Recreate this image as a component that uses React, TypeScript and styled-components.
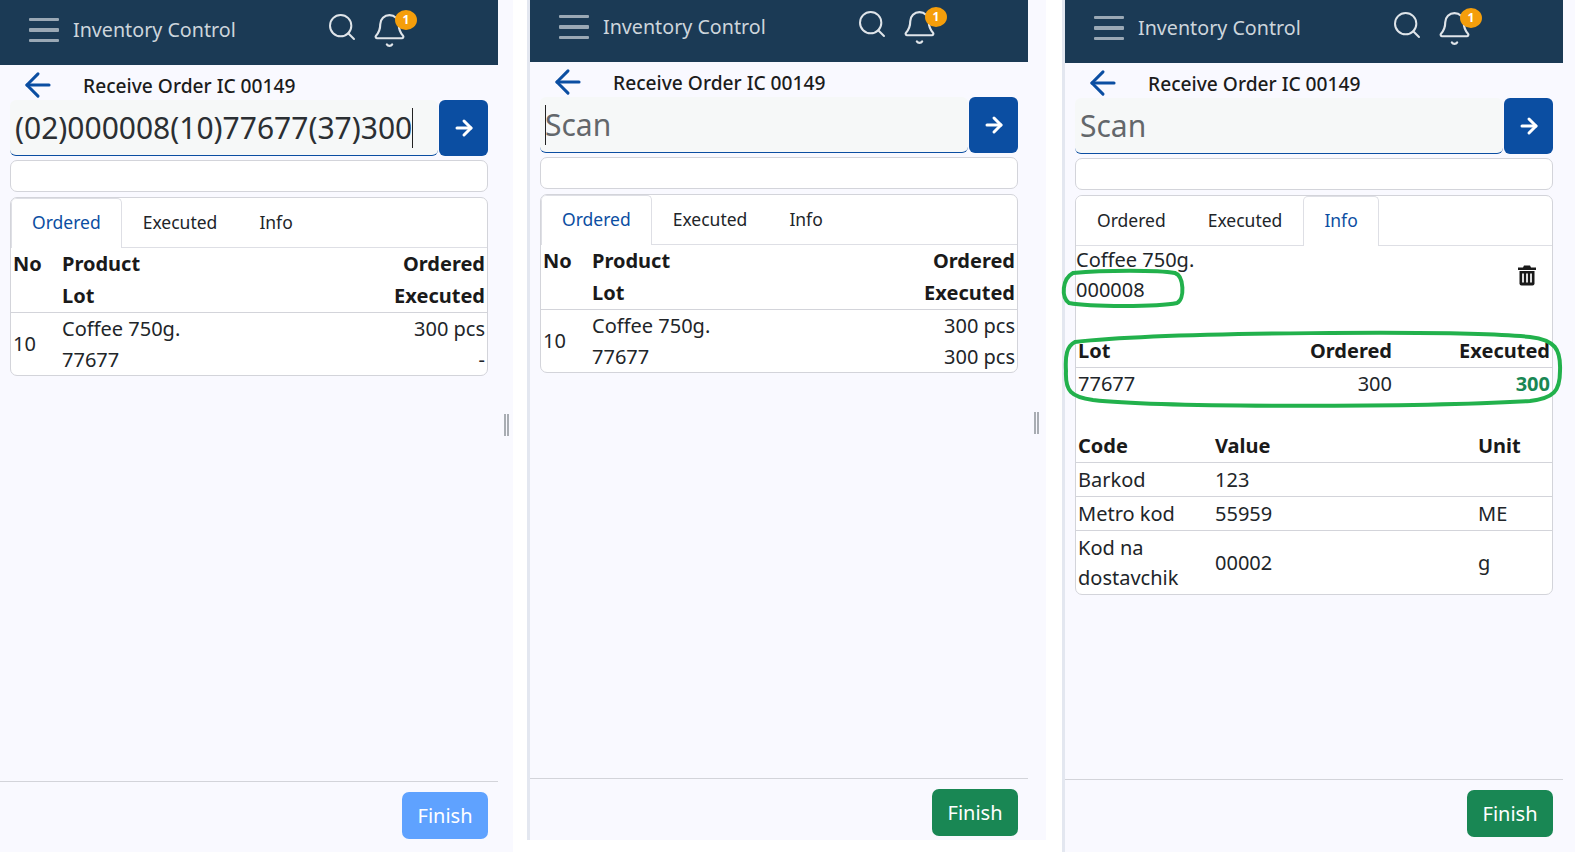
import React from "react";
import styled, { createGlobalStyle } from "styled-components";
import { ArrowLeft, ArrowRight, Bell, Search } from "lucide-react";

const GlobalStyle = createGlobalStyle`
	html, body {
		margin: 0;
		padding: 0;
		background: #ffffff;
		font-family: "Noto Sans", "Open Sans", sans-serif;
		color: #212529;
	}
`;

const Page = styled.div`
	display: flex;
	width: 1575px;
	height: 852px;
	overflow: hidden;
	background: #ffffff;
`;

const Panel = styled.div<{ $width: number; $height: number; $marginLeft: number; $edge?: boolean; $bottom: number; $gutter: number }>`
	position: relative;
	box-sizing: border-box;
	flex: none;
	width: ${p => p.$width}px;
	height: ${p => p.$height}px;
	margin-left: ${p => p.$marginLeft}px;
	padding-right: ${p => p.$gutter}px;
	padding-bottom: ${p => p.$bottom}px;
	background: #f9f9ff;
	border-left: ${p => (p.$edge ? "3px solid #e3e7f0" : "none")};
	display: flex;
	flex-direction: column;
`;

const Grip = styled.div<{ $right: number; $top: number }>`
	position: absolute;
	right: ${p => p.$right}px;
	top: ${p => p.$top}px;
	width: 1px;
	height: 22px;
	border-left: 2px solid #a9adb3;
	border-right: 2px solid #a9adb3;
`;

const TopBar = styled.header<{ $height: number }>`
	flex: none;
	box-sizing: border-box;
	height: ${p => p.$height}px;
	background: #1b3a55;
	display: flex;
	align-items: flex-end;
	padding: 0 0 10px 29px;
`;

const BarRow = styled.div`
	height: 50px;
	display: flex;
	align-items: center;
`;

const Burger = styled.div`
	width: 30px;
	display: flex;
	flex-direction: column;
	gap: 7px;
	margin-right: 14px;
	& > span {
		display: block;
		height: 3.5px;
		background: #9aa8b5;
		border-radius: 1px;
	}
`;

const AppName = styled.div`
	width: 253px;
	margin-bottom: 2px;
	font-size: 19.7px;
	color: #cdd5dc;
	white-space: nowrap;
`;

const IconSlot = styled.div<{ $width: number; $raise?: number }>`
	position: relative;
	width: ${p => p.$width}px;
	margin-bottom: ${p => p.$raise ?? 0}px;
	display: flex;
	color: #dfe4e9;
`;

const Badge = styled.span`
	position: absolute;
	left: 24px;
	top: -2px;
	width: 22px;
	height: 20px;
	border-radius: 50%;
	background: #f59e0b;
	color: #ffffff;
	font-size: 12px;
	font-weight: 700;
	line-height: 20px;
	text-align: center;
`;

const TitleRow = styled.div`
	flex: none;
	box-sizing: border-box;
	height: 35px;
	padding: 5px 0 0 19px;
	display: flex;
	align-items: center;
	font-size: 19.2px;
	font-weight: 500;
	color: #1c1c1c;
	& > svg {
		flex: none;
		color: #0b4ea2;
		margin-right: 26px;
	}
`;

const Content = styled.div`
	flex: 1;
	padding: 0 10px;
	display: flex;
	flex-direction: column;
`;

const ScanRow = styled.div`
	display: flex;
	height: 56px;
	gap: 1px;
`;

const ScanField = styled.div<{ $empty?: boolean }>`
	flex: 1;
	display: flex;
	align-items: center;
	padding: 0 5px;
	box-sizing: border-box;
	background: #f6f8f8;
	border-bottom: 1px solid #0b4ea2;
	border-radius: 6px;
	font-size: 30px;
	color: ${p => (p.$empty ? "#63676b" : "#2b2f33")};
	white-space: nowrap;
`;

const Caret = styled.span<{ $first?: boolean }>`
	display: inline-block;
	flex: none;
	width: 1px;
	height: 40px;
	margin-right: ${p => (p.$first ? "-1px" : "0")};
	background: #222222;
`;

const GoButton = styled.button`
	flex: none;
	width: 49px;
	border: none;
	border-radius: 6px;
	background: #0b4ea2;
	color: #ffffff;
	display: flex;
	align-items: center;
	justify-content: center;
	padding: 0;
`;

const MessageBox = styled.div`
	height: 30px;
	margin-top: 4px;
	background: #ffffff;
	border: 1px solid #d3d4da;
	border-radius: 7px;
`;

const Card = styled.div`
	margin-top: 5px;
	background: #ffffff;
	border: 1px solid #d3d4da;
	border-radius: 7px;
	overflow: hidden;
`;

const Tabs = styled.div`
	display: flex;
	height: 49px;
	border-bottom: 1px solid #dedfe5;
`;

const Tab = styled.div<{ $active?: boolean }>`
	display: flex;
	align-items: center;
	padding: 0 20px ${p => (p.$active ? "3px" : "2px")};
	font-size: 17.5px;
	margin-bottom: ${p => (p.$active ? "-1px" : "0")};
	color: ${p => (p.$active ? "#0b4ea2" : "#212529")};
	background: #ffffff;
	border-right: 1px solid ${p => (p.$active ? "#dedfe5" : "transparent")};
	border-left: 1px solid ${p => (p.$active ? "#dedfe5" : "transparent")};
	border-top: 1px solid ${p => (p.$active ? "#dedfe5" : "transparent")};
	border-radius: 5px 5px 0 0;
`;

const Grid = styled.table<{ $cellPad: number }>`
	width: 100%;
	border-collapse: collapse;
	font-size: 20px;
	& td {
		padding: ${p => p.$cellPad}px 2px;
	}
`;

const Th = styled.th<{ $right?: boolean; $width?: number }>`
	padding: 0 2px;
	line-height: 32px;
	font-weight: 700;
	text-align: ${p => (p.$right ? "right" : "left")};
	color: #1a1a1a;
	width: ${p => (p.$width ? `${p.$width}px` : "auto")};
`;

const Td = styled.td<{ $right?: boolean; $accent?: boolean }>`
	line-height: 30px;
	text-align: ${p => (p.$right ? "right" : "left")};
	color: ${p => (p.$accent ? "#198754" : "#212529")};
	font-weight: ${p => (p.$accent ? 700 : 400)};
`;

const HeadRow = styled.tr<{ $ruled?: boolean }>`
	border-bottom: ${p => (p.$ruled ? "1px solid #d3d4da" : "none")};
`;

const BodyRow = styled.tr<{ $last?: boolean }>`
	border-bottom: ${p => (p.$last ? "none" : "1px solid #d3d4da")};
`;

const ProductHead = styled.div`
	display: flex;
	justify-content: space-between;
	align-items: center;
	margin-top: -1px;
	font-size: 20px;
	line-height: 30px;
	color: #212529;
`;

const TrashButton = styled.div`
	display: flex;
	margin-right: 15px;
`;

const LotBlock = styled.div`
	margin-top: 30px;
`;

const CodeBlock = styled.div`
	margin-top: 31px;
`;

const Footer = styled.div`
	flex: none;
	height: 58px;
	box-sizing: border-box;
	border-top: 1px solid #d3d4da;
	padding: 10px 10px 0 0;
	display: flex;
	justify-content: flex-end;
`;

const FinishButton = styled.button<{ $disabled?: boolean }>`
	width: 86px;
	height: 47px;
	border: none;
	border-radius: 7px;
	background: ${p => (p.$disabled ? "#5fa2ff" : "#198754")};
	color: #ffffff;
	font-family: inherit;
	font-size: 20px;
	padding: 0;
`;

const Marks = styled.svg`
	position: absolute;
	left: 0;
	top: 0;
	width: 510px;
	height: 852px;
	overflow: visible;
	pointer-events: none;
`;

function TrashIcon() {
	return <svg width="20" height="22" viewBox="0 0 20 22">
		<path d="M7 1.5h6l1 2h5v2.5H1V3.500h5z" fill="#1a1a1a"/>
		<path d="M2.500 7h15v12.500a2 2 0 0 1-2 2h-11a2 2 0 0 1-2-2z" fill="#1a1a1a"/>
		<path d="M6 9.500v9M10 9.500v9M14 9.500v9" stroke="#ffffff" strokeWidth="1.700"/>
	</svg>;
}

function Shell(props: {
	barHeight: number;
	scan?: string;
	caretFirst?: boolean;
	finishDisabled?: boolean;
	children: React.ReactNode;
}) {
	return <>
		<TopBar $height={props.barHeight}>
			<BarRow>
				<Burger><span/><span/><span/></Burger>
				<AppName>Inventory Control</AppName>
				<IconSlot $width={45} $raise={6}><Search size={32} strokeWidth={1.5}/></IconSlot>
				<IconSlot $width={46}>
					<Bell size={37} strokeWidth={1.4}/>
					<Badge>1</Badge>
				</IconSlot>
			</BarRow>
		</TopBar>
		<TitleRow>
			<ArrowLeft size={38} strokeWidth={1.9}/>
			Receive Order IC 00149
		</TitleRow>
		<Content>
			<ScanRow>
				{props.scan
					? <ScanField>{props.scan}<Caret/></ScanField>
					: <ScanField $empty>{props.caretFirst && <Caret $first/>}Scan</ScanField>}
				<GoButton><ArrowRight size={24} strokeWidth={3}/></GoButton>
			</ScanRow>
			<MessageBox/>
			{props.children}
		</Content>
		<Footer>
			<FinishButton $disabled={props.finishDisabled}>Finish</FinishButton>
		</Footer>
	</>;
}

function OrderedCard(props: { executed: string }) {
	return <Card>
		<Tabs>
			<Tab $active>Ordered</Tab>
			<Tab>Executed</Tab>
			<Tab>Info</Tab>
		</Tabs>
		<Grid $cellPad={0.5}>
			<thead>
				<HeadRow>
					<Th $width={45}>No</Th>
					<Th>Product</Th>
					<Th $right>Ordered</Th>
				</HeadRow>
				<HeadRow $ruled>
					<Th/>
					<Th>Lot</Th>
					<Th $right>Executed</Th>
				</HeadRow>
			</thead>
			<tbody>
				<BodyRow $last>
					<Td rowSpan={2}>10</Td>
					<Td>Coffee 750g.</Td>
					<Td $right>300 pcs</Td>
				</BodyRow>
				<BodyRow $last>
					<Td>77677</Td>
					<Td $right>{props.executed}</Td>
				</BodyRow>
			</tbody>
		</Grid>
	</Card>;
}

function InfoCard() {
	return <Card>
		<Tabs>
			<Tab>Ordered</Tab>
			<Tab>Executed</Tab>
			<Tab $active>Info</Tab>
		</Tabs>
		<ProductHead>
			<div>
				<div>Coffee 750g.</div>
				<div>000008</div>
			</div>
			<TrashButton><TrashIcon/></TrashButton>
		</ProductHead>
		<LotBlock>
			<Grid $cellPad={0.5}>
				<thead>
					<HeadRow $ruled>
						<Th>Lot</Th>
						<Th $right>Ordered</Th>
						<Th $right $width={154}>Executed</Th>
					</HeadRow>
				</thead>
				<tbody>
					<BodyRow $last>
						<Td>77677</Td>
						<Td $right>300</Td>
						<Td $right $accent>300</Td>
					</BodyRow>
				</tbody>
			</Grid>
		</LotBlock>
		<CodeBlock>
			<Grid $cellPad={1.5}>
				<thead>
					<HeadRow $ruled>
						<Th $width={133}>Code</Th>
						<Th>Value</Th>
						<Th $width={72}>Unit</Th>
					</HeadRow>
				</thead>
				<tbody>
					<BodyRow>
						<Td>Barkod</Td>
						<Td>123</Td>
						<Td/>
					</BodyRow>
					<BodyRow>
						<Td>Metro kod</Td>
						<Td>55959</Td>
						<Td>ME</Td>
					</BodyRow>
					<BodyRow $last>
						<Td>Kod na dostavchik</Td>
						<Td>00002</Td>
						<Td>g</Td>
					</BodyRow>
				</tbody>
			</Grid>
		</CodeBlock>
	</Card>;
}

export default function App() {
	return <Page>
		<GlobalStyle/>
		<Panel $width={513} $height={852} $marginLeft={0} $bottom={13} $gutter={15}>
			<Shell barHeight={65} scan="(02)000008(10)77677(37)300" finishDisabled>
				<OrderedCard executed="-"/>
			</Shell>
			<Grip $right={4} $top={414}/>
		</Panel>
		<Panel $width={519} $height={840} $marginLeft={14} $edge $bottom={4} $gutter={18}>
			<Shell barHeight={62} caretFirst>
				<OrderedCard executed="300 pcs"/>
			</Shell>
			<Grip $right={7} $top={412}/>
		</Panel>
		<Panel $width={513} $height={852} $marginLeft={16} $edge $bottom={15} $gutter={12}>
			<Shell barHeight={63}>
				<InfoCard/>
			</Shell>
			<Marks viewBox="0 0 510 852">
				<path d="M8 273 C40 270 93 270 110 273 C119 276 120 299 112 303 C93 307 25 307 4 303 C-4 297 -3 279 8 273 Z" fill="none" stroke="#22b14c" strokeWidth="4"/>
				<path d="M10 342 C100 332 400 330 465 337 C490 340 496 349 495 371 C495 391 489 398 465 401 C360 407 100 408 28 400 C6 397 0 391 1 371 C0 355 2 346 10 342 Z" fill="none" stroke="#22b14c" strokeWidth="4"/>
			</Marks>
		</Panel>
	</Page>;
}
